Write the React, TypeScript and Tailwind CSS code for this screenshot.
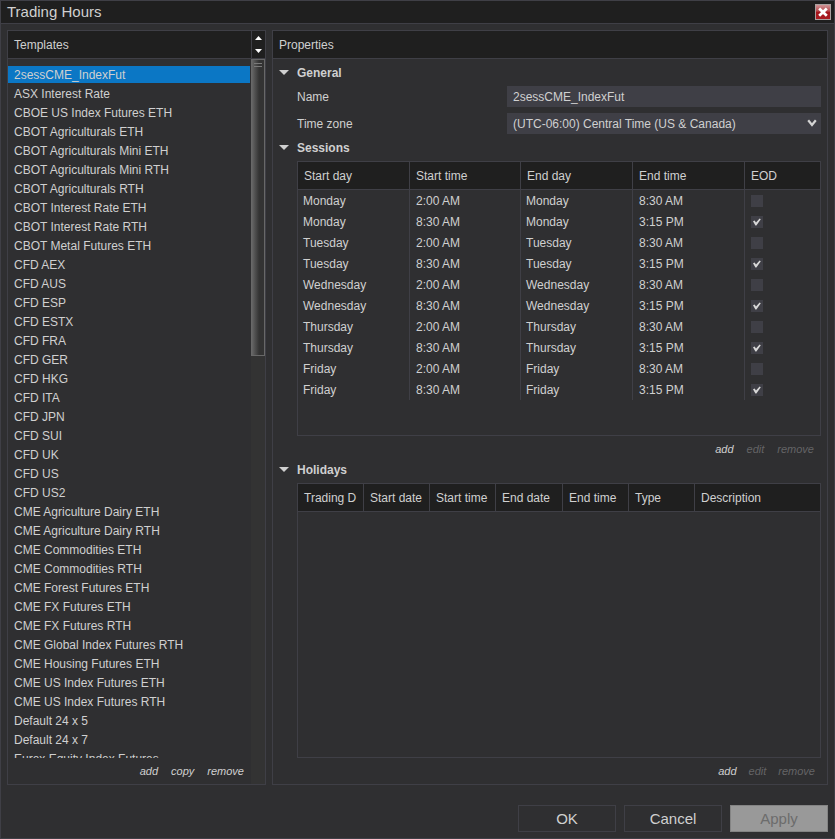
import { useState } from "react";
import type { ReactNode } from "react";

const templates = [
  "2sessCME_IndexFut",
  "ASX Interest Rate",
  "CBOE US Index Futures ETH",
  "CBOT Agriculturals ETH",
  "CBOT Agriculturals Mini ETH",
  "CBOT Agriculturals Mini RTH",
  "CBOT Agriculturals RTH",
  "CBOT Interest Rate ETH",
  "CBOT Interest Rate RTH",
  "CBOT Metal Futures ETH",
  "CFD AEX",
  "CFD AUS",
  "CFD ESP",
  "CFD ESTX",
  "CFD FRA",
  "CFD GER",
  "CFD HKG",
  "CFD ITA",
  "CFD JPN",
  "CFD SUI",
  "CFD UK",
  "CFD US",
  "CFD US2",
  "CME Agriculture Dairy ETH",
  "CME Agriculture Dairy RTH",
  "CME Commodities ETH",
  "CME Commodities RTH",
  "CME Forest Futures ETH",
  "CME FX Futures ETH",
  "CME FX Futures RTH",
  "CME Global Index Futures RTH",
  "CME Housing Futures ETH",
  "CME US Index Futures ETH",
  "CME US Index Futures RTH",
  "Default 24 x 5",
  "Default 24 x 7",
  "Eurex Equity Index Futures",
];

const sessions = ["Monday", "Tuesday", "Wednesday", "Thursday", "Friday"].flatMap((day) => [
  { day, start: "2:00 AM", end: "8:30 AM", eod: false },
  { day, start: "8:30 AM", end: "3:15 PM", eod: true },
]);

const sessionColumns = [
  { label: "Start day", width: "w-[112px]" },
  { label: "Start time", width: "w-[111px]" },
  { label: "End day", width: "w-[112px]" },
  { label: "End time", width: "w-[112px]" },
  { label: "EOD", width: "" },
];

const holidayColumns = [
  { label: "Trading D", width: "w-[66px]" },
  { label: "Start date", width: "w-[66px]" },
  { label: "Start time", width: "w-[66px]" },
  { label: "End date", width: "w-[67px]" },
  { label: "End time", width: "w-[66px]" },
  { label: "Type", width: "w-[66px]" },
  { label: "Description", width: "" },
];

function HeaderRow({ columns }: { columns: { label: string; width: string }[] }) {
  return (
    <thead>
      <tr className="h-7 bg-[#1f1f1f]">
        {columns.map((c) => (
          <th
            key={c.label}
            scope="col"
            className={`overflow-hidden border-r border-b border-[#3f3f46] p-0 pl-1.5 text-left font-normal whitespace-nowrap last:border-r-0 ${c.width}`}
          >
            {c.label}
          </th>
        ))}
      </tr>
    </thead>
  );
}

function SectionTitle({ children }: { children: ReactNode }) {
  return (
    <h2 className="h-4 font-bold">
      <button type="button" aria-expanded="true" className="flex h-4 items-center gap-2">
        <svg className="mb-0.5" width="10" height="5" viewBox="0 0 10 5" aria-hidden="true">
          <path d="M0 0h10L5 5z" fill="#d0d0d0" />
        </svg>
        {children}
      </button>
    </h2>
  );
}

function Actions({ items, disabled = [], className }: { items: string[]; disabled?: string[]; className: string }) {
  return (
    <div className={`flex justify-end text-[11px] leading-4 italic ${className}`}>
      {items.map((item) => (
        <button key={item} type="button" disabled={disabled.includes(item)} className="disabled:text-[#646466]">
          {item}
        </button>
      ))}
    </div>
  );
}

function EodBox({ checked, label }: { checked: boolean; label: string }) {
  return (
    <span className="grid size-3">
      <input
        type="checkbox"
        defaultChecked={checked}
        aria-label={label}
        className="peer col-start-1 row-start-1 size-3 appearance-none bg-[#3f3f46]"
      />
      <svg
        className="pointer-events-none invisible col-start-1 row-start-1 peer-checked:visible"
        width="12"
        height="12"
        viewBox="0 0 12 12"
        aria-hidden="true"
      >
        <path d="M2 5.2 3.6 4.6 5 6.4 8.6 2.4 9.8 3.2 5.4 9.4 4.4 9.4z" fill="#d8d8d8" />
      </svg>
    </span>
  );
}

export default function App() {
  const [selected, setSelected] = useState(0);

  return (
    <div className="flex h-screen flex-col border border-[#3f3f46] bg-[#2f2f31] font-['Liberation_Sans',Arial,sans-serif] text-xs text-[#d0d0d0]">
      <header className="flex h-[23px] shrink-0 items-center justify-between border-b border-[#3f3f46] bg-[#1f1f1f] pr-[3px] pl-1.5">
        <h1 className="text-[15px] leading-5">Trading Hours</h1>
        <button type="button" aria-label="Close">
          <svg width="16" height="16" viewBox="0 0 16 16" aria-hidden="true">
            <defs>
              <linearGradient id="close-fill" x1="0" y1="0" x2="0" y2="1">
                <stop offset="0" stopColor="#cf9a9c" />
                <stop offset="0.45" stopColor="#b8474c" />
                <stop offset="0.5" stopColor="#a3151c" />
                <stop offset="1" stopColor="#ab1c22" />
              </linearGradient>
            </defs>
            <rect x="0.5" y="0.5" width="15" height="15" fill="url(#close-fill)" stroke="#a9a0a0" />
            <path d="M4.2 4.6 11.8 11.8M11.8 4.6 4.2 11.8" stroke="#fff" strokeWidth="2.8" />
          </svg>
        </button>
      </header>

      <main className="flex min-h-0 flex-1 gap-1.5 px-1.5 pt-1.5">
        <section className="flex w-[259px] shrink-0 border border-[#3f3f46]">
          <div className="flex min-w-0 flex-1 flex-col">
            <h2 className="h-7 shrink-0 border-b border-[#3f3f46] bg-[#1f1f1f] pl-1.5 leading-7">Templates</h2>
            <ul className="min-h-0 flex-1 overflow-hidden pt-[7px] pr-px">
              {templates.map((name, i) => (
                <li key={name} className="h-[19px]">
                  <button
                    type="button"
                    onClick={() => setSelected(i)}
                    className={`block h-[17px] w-full pl-1.5 text-left leading-[18px] whitespace-nowrap ${
                      i === selected ? "bg-[#0b77c5]" : ""
                    }`}
                  >
                    {name}
                  </button>
                </li>
              ))}
            </ul>
            <Actions items={["add", "copy", "remove"]} className="h-[26px] shrink-0 items-center gap-[13px] pr-[7px]" />
          </div>
          <div className="flex w-3.5 shrink-0 flex-col bg-[#333333]">
            <div className="flex h-7 shrink-0 flex-col items-center justify-between border-b border-l border-[#3f3f46] bg-[#1f1f1f] py-[5px]">
              <button type="button" aria-label="Scroll up">
                <svg className="block" width="7" height="4" viewBox="0 0 7 4" aria-hidden="true">
                  <path d="M0 4 3.5 0 7 4z" fill="#fff" />
                </svg>
              </button>
              <button type="button" aria-label="Scroll down">
                <svg className="block" width="7" height="4" viewBox="0 0 7 4" aria-hidden="true">
                  <path d="M0 0h7L3.5 4z" fill="#fff" />
                </svg>
              </button>
            </div>
            <div className="flex h-[297px] flex-col items-center gap-0.5 border border-[#686868] bg-linear-to-r from-[#666666] to-[#333333] to-60% pt-[3px]">
              <span className="h-px w-2 bg-[#7a7a7a]" />
              <span className="h-px w-2 bg-[#7a7a7a]" />
            </div>
          </div>
        </section>

        <section className="flex min-w-0 flex-1 flex-col border border-[#3f3f46]">
          <h2 className="h-7 shrink-0 border-b border-[#3f3f46] bg-[#1f1f1f] pl-1.5 leading-7">Properties</h2>
          <div className="flex min-h-0 flex-1 flex-col px-1.5 pt-1.5">
            <SectionTitle>General</SectionTitle>
            <div className="mt-[5px] grid shrink-0 grid-cols-[210px_1fr] items-center gap-y-1.5 pl-[18px]">
              <label htmlFor="template-name">Name</label>
              <input
                id="template-name"
                defaultValue="2sessCME_IndexFut"
                className="h-[21px] w-full min-w-0 bg-[#3f3f46] px-1.5 outline-none"
              />
              <label htmlFor="time-zone">Time zone</label>
              <div className="relative">
                <select id="time-zone" className="block h-[21px] w-full appearance-none bg-[#3f3f46] px-1.5 outline-none">
                  <option>(UTC-06:00) Central Time (US &amp; Canada)</option>
                </select>
                <svg
                  className="pointer-events-none absolute top-1.5 right-1"
                  width="10"
                  height="8"
                  viewBox="0 0 10 8"
                  aria-hidden="true"
                >
                  <path d="M1.2 1.2 5 6 8.8 1.2" fill="none" stroke="#d4d4d4" strokeWidth="2.2" />
                </svg>
              </div>
            </div>

            <div className="mt-1.5 shrink-0">
              <SectionTitle>Sessions</SectionTitle>
            </div>
            <div className="mt-[5px] ml-[18px] h-[275px] shrink-0 border border-[#3f3f46]">
              <table className="w-full table-fixed border-separate border-spacing-0">
                <HeaderRow columns={sessionColumns} />
                <tbody>
                  {sessions.map((s, i) => (
                    <tr key={i} className="h-[21px]">
                      <td className="border-r border-[#3f3f46] p-0 pl-[5px]">{s.day}</td>
                      <td className="border-r border-[#3f3f46] p-0 pl-1.5">{s.start}</td>
                      <td className="border-r border-[#3f3f46] p-0 pl-[5px]">{s.day}</td>
                      <td className="border-r border-[#3f3f46] p-0 pl-1.5">{s.end}</td>
                      <td className="p-0 pl-1.5">
                        <EodBox checked={s.eod} label={`End of day, ${s.day} ${s.end}`} />
                      </td>
                    </tr>
                  ))}
                </tbody>
              </table>
            </div>
            <Actions
              items={["add", "edit", "remove"]}
              disabled={["edit", "remove"]}
              className="h-[26px] shrink-0 items-center gap-[13px] pr-[7px]"
            />

            <SectionTitle>Holidays</SectionTitle>
            <div className="mt-[5px] ml-[18px] min-h-0 flex-1 border border-[#3f3f46]">
              <table className="w-full table-fixed border-separate border-spacing-0">
                <HeaderRow columns={holidayColumns} />
              </table>
            </div>
            <Actions
              items={["add", "edit", "remove"]}
              disabled={["edit", "remove"]}
              className="h-[26px] shrink-0 items-center gap-3 pr-1.5"
            />
          </div>
        </section>
      </main>

      <footer className="flex shrink-0 justify-end gap-2 pt-5 pr-1.5 pb-1.5 text-[15px]">
        <button type="button" className="h-[27px] w-[98px] border border-[#3f3f46]">
          OK
        </button>
        <button type="button" className="h-[27px] w-[98px] border border-[#3f3f46]">
          Cancel
        </button>
        <button type="button" disabled className="h-[27px] w-[98px] border border-[#848484] bg-[#999999] text-[#6c6c6c]">
          Apply
        </button>
      </footer>
    </div>
  );
}
